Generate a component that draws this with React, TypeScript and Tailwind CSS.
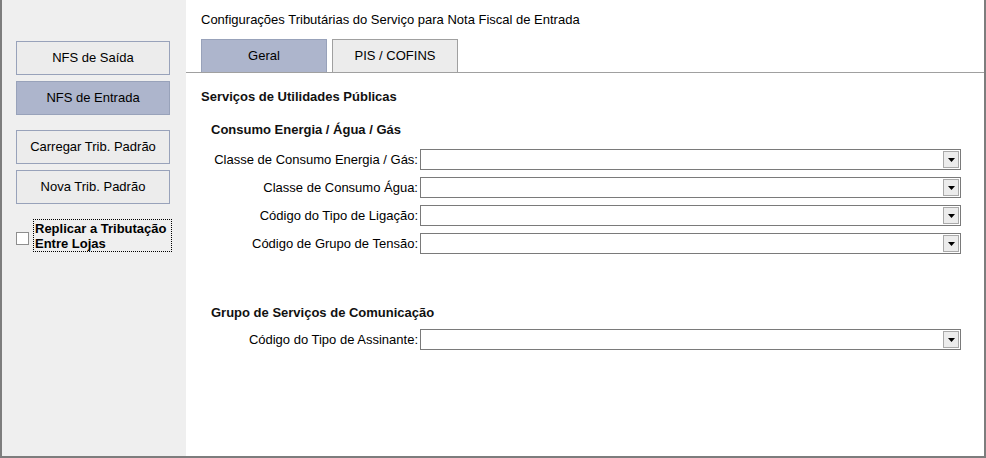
import { ReactNode } from "react";

const font = "font-['Liberation_Sans',Arial,sans-serif]";

const sideButtons = [
  { label: "NFS de Saída", active: false, mt: "mt-0" },
  { label: "NFS de Entrada", active: true, mt: "mt-[6px]" },
  { label: "Carregar Trib. Padrão", active: false, mt: "mt-[15px]" },
  { label: "Nova Trib. Padrão", active: false, mt: "mt-[6px]" },
];

const energiaRows = [
  "Classe de Consumo Energia / Gás:",
  "Classe de Consumo Água:",
  "Código do Tipo de Ligação:",
  "Código de Grupo de Tensão:",
];

function Select() {
  return (
    <div className="w-[541px] h-[21px] border border-[#7a7a7a] bg-white flex justify-end items-stretch p-px">
      <div className="w-[16px] border border-[#a9a9a9] bg-[#ececec] flex items-center justify-center">
        <svg width="7" height="4" viewBox="0 0 7 4">
          <path d="M0 0 H7 L3.5 4 Z" fill="#000" />
        </svg>
      </div>
    </div>
  );
}

function Row({ label }: { label: string }) {
  return (
    <div className="flex items-center">
      <span className="w-[209px] text-right pr-[2px] text-[13px] text-black leading-[16px]">{label}</span>
      <Select />
    </div>
  );
}

function Heading({ children, className }: { children: ReactNode; className?: string }) {
  return <div className={`text-[13px] font-bold leading-[16px] text-[#111] ${className ?? ""}`}>{children}</div>;
}

export default function App() {
  return (
    <div className={`${font} w-[986px] h-[458px] flex bg-white border-l-2 border-r-2 border-b-2 border-[#7d7d7d]`}>
      <aside className="w-[184px] bg-[#efefef] pt-[41px] pl-[14px] flex flex-col">
        {sideButtons.map((b) => (
          <div
            key={b.label}
            className={`${b.mt} w-[154px] h-[34px] flex items-center justify-center text-[13px] text-black border border-[#98a2ba] ${b.active ? "bg-[#adb5cc]" : "bg-[#ececec]"}`}
          >
            {b.label}
          </div>
        ))}
        <div className="mt-[15px] flex items-center">
          <div className="w-[13px] h-[13px] border border-[#8e8e8e] bg-white shrink-0 mt-[5px]" />
          <div className="ml-[4px] w-[139px] h-[33px] border border-dotted border-black px-[1px] text-[13px] font-bold leading-[15px] text-black flex flex-col justify-center">
            <span>Replicar a Tributação</span>
            <span>Entre Lojas</span>
          </div>
        </div>
      </aside>

      <main className="flex-1 flex flex-col">
        <div className="mt-[12px] ml-[15px] text-[13px] leading-[16px] text-black">
          Configurações Tributárias do Serviço para Nota Fiscal de Entrada
        </div>
        <div className="mt-[11px] flex gap-[5px] pl-[15px] border-b border-[#a0a0a0]">
          <div className="w-[126px] h-[33px] border border-b-0 border-[#98a2ba] bg-[#adb5cc] flex items-center justify-center text-[13px] text-black">
            Geral
          </div>
          <div className="w-[126px] h-[33px] border border-b-0 border-[#a0a0a0] bg-[#ececec] flex items-center justify-center text-[13px] text-black">
            PIS / COFINS
          </div>
        </div>

        <div className="pl-[15px] flex flex-col">
          <Heading className="mt-[16px]">Serviços de Utilidades Públicas</Heading>
          <div className="pl-[10px] flex flex-col">
            <Heading className="mt-[17px]">Consumo Energia / Água / Gás</Heading>
            <div className="mt-[11px] flex flex-col gap-[7px]">
              {energiaRows.map((r) => (
                <Row key={r} label={r} />
              ))}
            </div>
            <Heading className="mt-[51px]">Grupo de Serviços de Comunicação</Heading>
            <div className="mt-[8px]">
              <Row label="Código do Tipo de Assinante:" />
            </div>
          </div>
        </div>
      </main>
    </div>
  );
}
